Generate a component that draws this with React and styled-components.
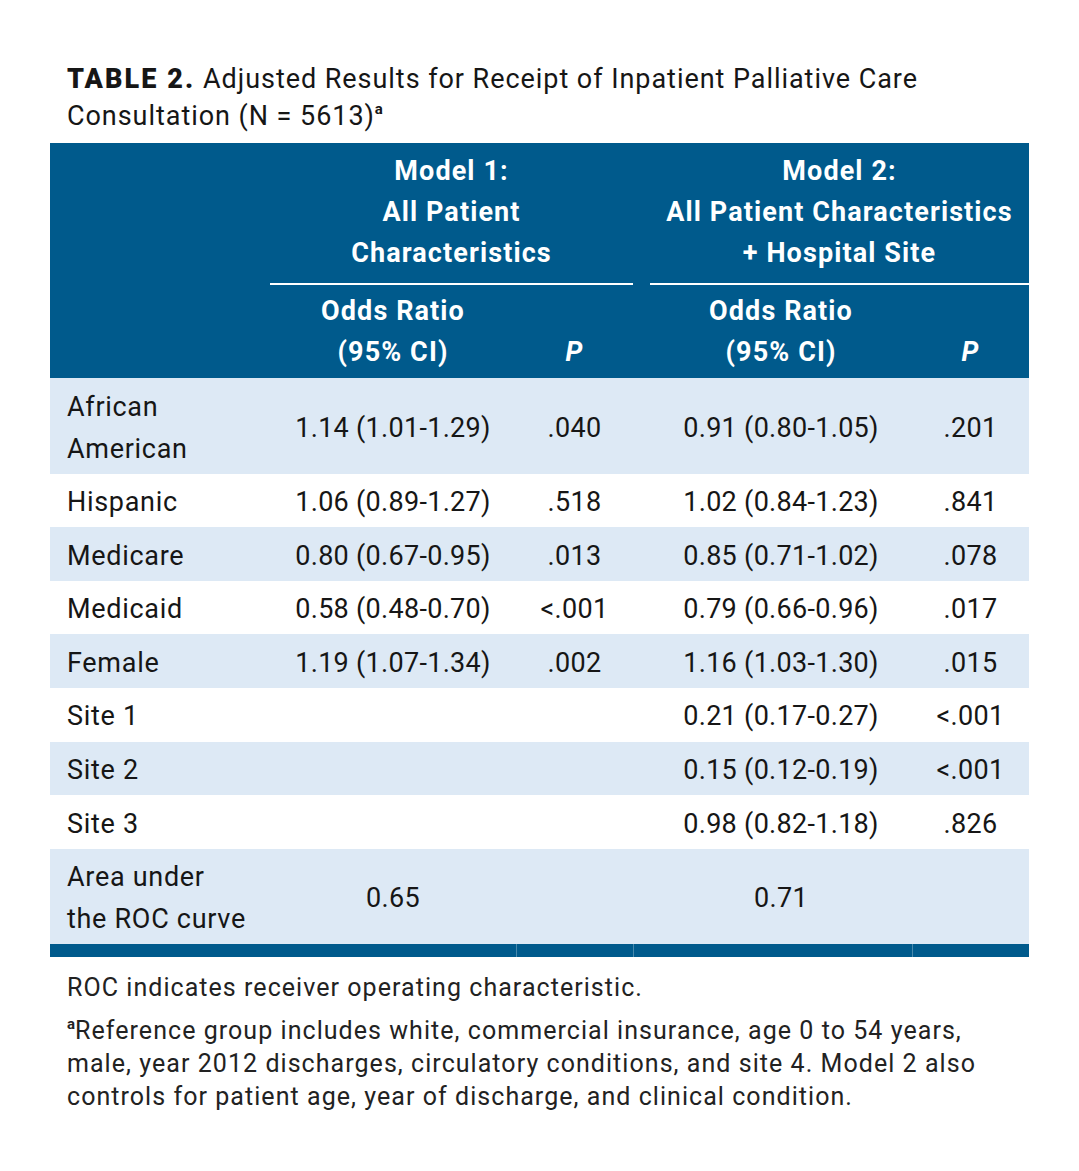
import React from 'react'
import styled, {createGlobalStyle} from 'styled-components';

const Colors = {
    header: '#005a8c',
    stripe: '#dde9f5',
    ink: '#161616',
};

const GlobalStyle = createGlobalStyle`
  html, body {
    margin: 0;
    background: #fff;
  }
  body {
    font-family: Roboto, "Liberation Sans", sans-serif;
    color: ${Colors.ink};
  }
`;

const Page = styled.div`
  width: 1079px;
  padding: 61px 50px 40px 50px;
  box-sizing: border-box;
`;

const Caption = styled.h2`
  margin: 0 0 8px 17px;
  font-size: 27px;
  font-weight: 400;
  line-height: 37px;
  letter-spacing: 0.95px;
`;

const Label = styled.span`
  font-weight: 900;
  letter-spacing: 2.1px;
`;

const Sup = styled.sup`
  font-size: 15px;
  font-weight: 700;
  vertical-align: ${p => p.$small ? '10px' : '11px'};
  line-height: 0;
  letter-spacing: 0;
`;

const Table = styled.table`
  width: 979px;
  border-collapse: collapse;
  table-layout: fixed;
  font-size: 27px;
  letter-spacing: 0.3px;
`;

const HeadCell = styled.th`
  background: ${Colors.header};
  color: #fff;
  font-weight: 700;
  letter-spacing: 1.1px;
  line-height: 41px;
  text-align: center;
  vertical-align: ${p => p.$bottom ? 'bottom' : 'top'};
  padding: ${p => p.$top ? '8px 0 0 0' : '6px 0 5px 0'};
  padding-left: ${p => p.$indent ? '17px' : '0'};
`;

const ModelTitle = styled.div`
  margin-left: ${p => p.$indent ? '17px' : '0'};
  padding-bottom: 9px;
  border-bottom: 2px solid #fff;
`;

const Italic = styled.i`
  font-style: italic;
`;

const Row = styled.tr`
  background: ${p => p.$striped ? Colors.stripe : '#fff'};
`;

const Cell = styled.td`
  line-height: 42px;
  padding: 7.5px 0 4.1px ${p => p.$indent ? '17px' : '0'};
  text-align: center;
  vertical-align: middle;
`;

const RowLabel = styled(Cell)`
  padding-left: 17px;
  text-align: left;
  letter-spacing: 0.7px;
`;

const FootRow = styled.tr`
  height: 13px;
  background: ${Colors.header};
`;

const FootCell = styled.td`
  padding: 0;
  height: 13px;
  border-left: ${p => p.$divider ? '1px solid rgba(255,255,255,0.28)' : 'none'};
`;

const Notes = styled.div`
  margin: 14px 0 0 17px;
  font-size: 25px;
  line-height: 33px;
  letter-spacing: 1.05px;
  color: #222;

  p {
    margin: 0 0 10px 0;
  }
`;

const rows = [
    {label: 'African American', or1: '1.14 (1.01-1.29)', p1: '.040', or2: '0.91 (0.80-1.05)', p2: '.201', wide: true},
    {label: 'Hispanic', or1: '1.06 (0.89-1.27)', p1: '.518', or2: '1.02 (0.84-1.23)', p2: '.841'},
    {label: 'Medicare', or1: '0.80 (0.67-0.95)', p1: '.013', or2: '0.85 (0.71-1.02)', p2: '.078'},
    {label: 'Medicaid', or1: '0.58 (0.48-0.70)', p1: '<.001', or2: '0.79 (0.66-0.96)', p2: '.017'},
    {label: 'Female', or1: '1.19 (1.07-1.34)', p1: '.002', or2: '1.16 (1.03-1.30)', p2: '.015'},
    {label: 'Site 1', or1: '', p1: '', or2: '0.21 (0.17-0.27)', p2: '<.001'},
    {label: 'Site 2', or1: '', p1: '', or2: '0.15 (0.12-0.19)', p2: '<.001'},
    {label: 'Site 3', or1: '', p1: '', or2: '0.98 (0.82-1.18)', p2: '.826'},
];

export default function App() {
    return (
        <Page>
            <GlobalStyle/>
            <Caption>
                <Label>TABLE 2.</Label> Adjusted Results for Receipt of Inpatient Palliative Care
                Consultation (N = 5613)<Sup>a</Sup>
            </Caption>
            <Table>
                <colgroup>
                    <col style={{width: 220}}/>
                    <col style={{width: 246}}/>
                    <col style={{width: 117}}/>
                    <col style={{width: 279}}/>
                    <col style={{width: 117}}/>
                </colgroup>
                <thead>
                    <tr>
                        <HeadCell rowSpan={2}/>
                        <HeadCell colSpan={2} $top>
                            <ModelTitle>Model 1:<br/>All Patient<br/>Characteristics</ModelTitle>
                        </HeadCell>
                        <HeadCell colSpan={2} $top>
                            <ModelTitle $indent>Model 2:<br/>All Patient Characteristics<br/>+ Hospital Site</ModelTitle>
                        </HeadCell>
                    </tr>
                    <tr>
                        <HeadCell>Odds Ratio<br/>(95% CI)</HeadCell>
                        <HeadCell $bottom><Italic>P</Italic></HeadCell>
                        <HeadCell $indent>Odds Ratio<br/>(95% CI)</HeadCell>
                        <HeadCell $bottom><Italic>P</Italic></HeadCell>
                    </tr>
                </thead>
                <tbody>
                    {rows.map((r, i) => (
                        <Row key={r.label} $striped={i % 2 === 0}>
                            <RowLabel>{r.wide ? <>African<br/>American</> : r.label}</RowLabel>
                            <Cell>{r.or1}</Cell>
                            <Cell>{r.p1}</Cell>
                            <Cell $indent>{r.or2}</Cell>
                            <Cell>{r.p2}</Cell>
                        </Row>
                    ))}
                    <Row $striped>
                        <RowLabel>Area under<br/>the ROC curve</RowLabel>
                        <Cell>0.65</Cell>
                        <Cell/>
                        <Cell $indent>0.71</Cell>
                        <Cell/>
                    </Row>
                    <FootRow>
                        <FootCell/>
                        <FootCell/>
                        <FootCell $divider/>
                        <FootCell $divider/>
                        <FootCell $divider/>
                    </FootRow>
                </tbody>
            </Table>
            <Notes>
                <p>ROC indicates receiver operating characteristic.</p>
                <p><Sup $small>a</Sup>Reference group includes white, commercial insurance, age 0 to 54 years,
                    male, year 2012 discharges, circulatory conditions, and site 4. Model 2 also
                    controls for patient age, year of discharge, and clinical condition.</p>
            </Notes>
        </Page>
    )
}
